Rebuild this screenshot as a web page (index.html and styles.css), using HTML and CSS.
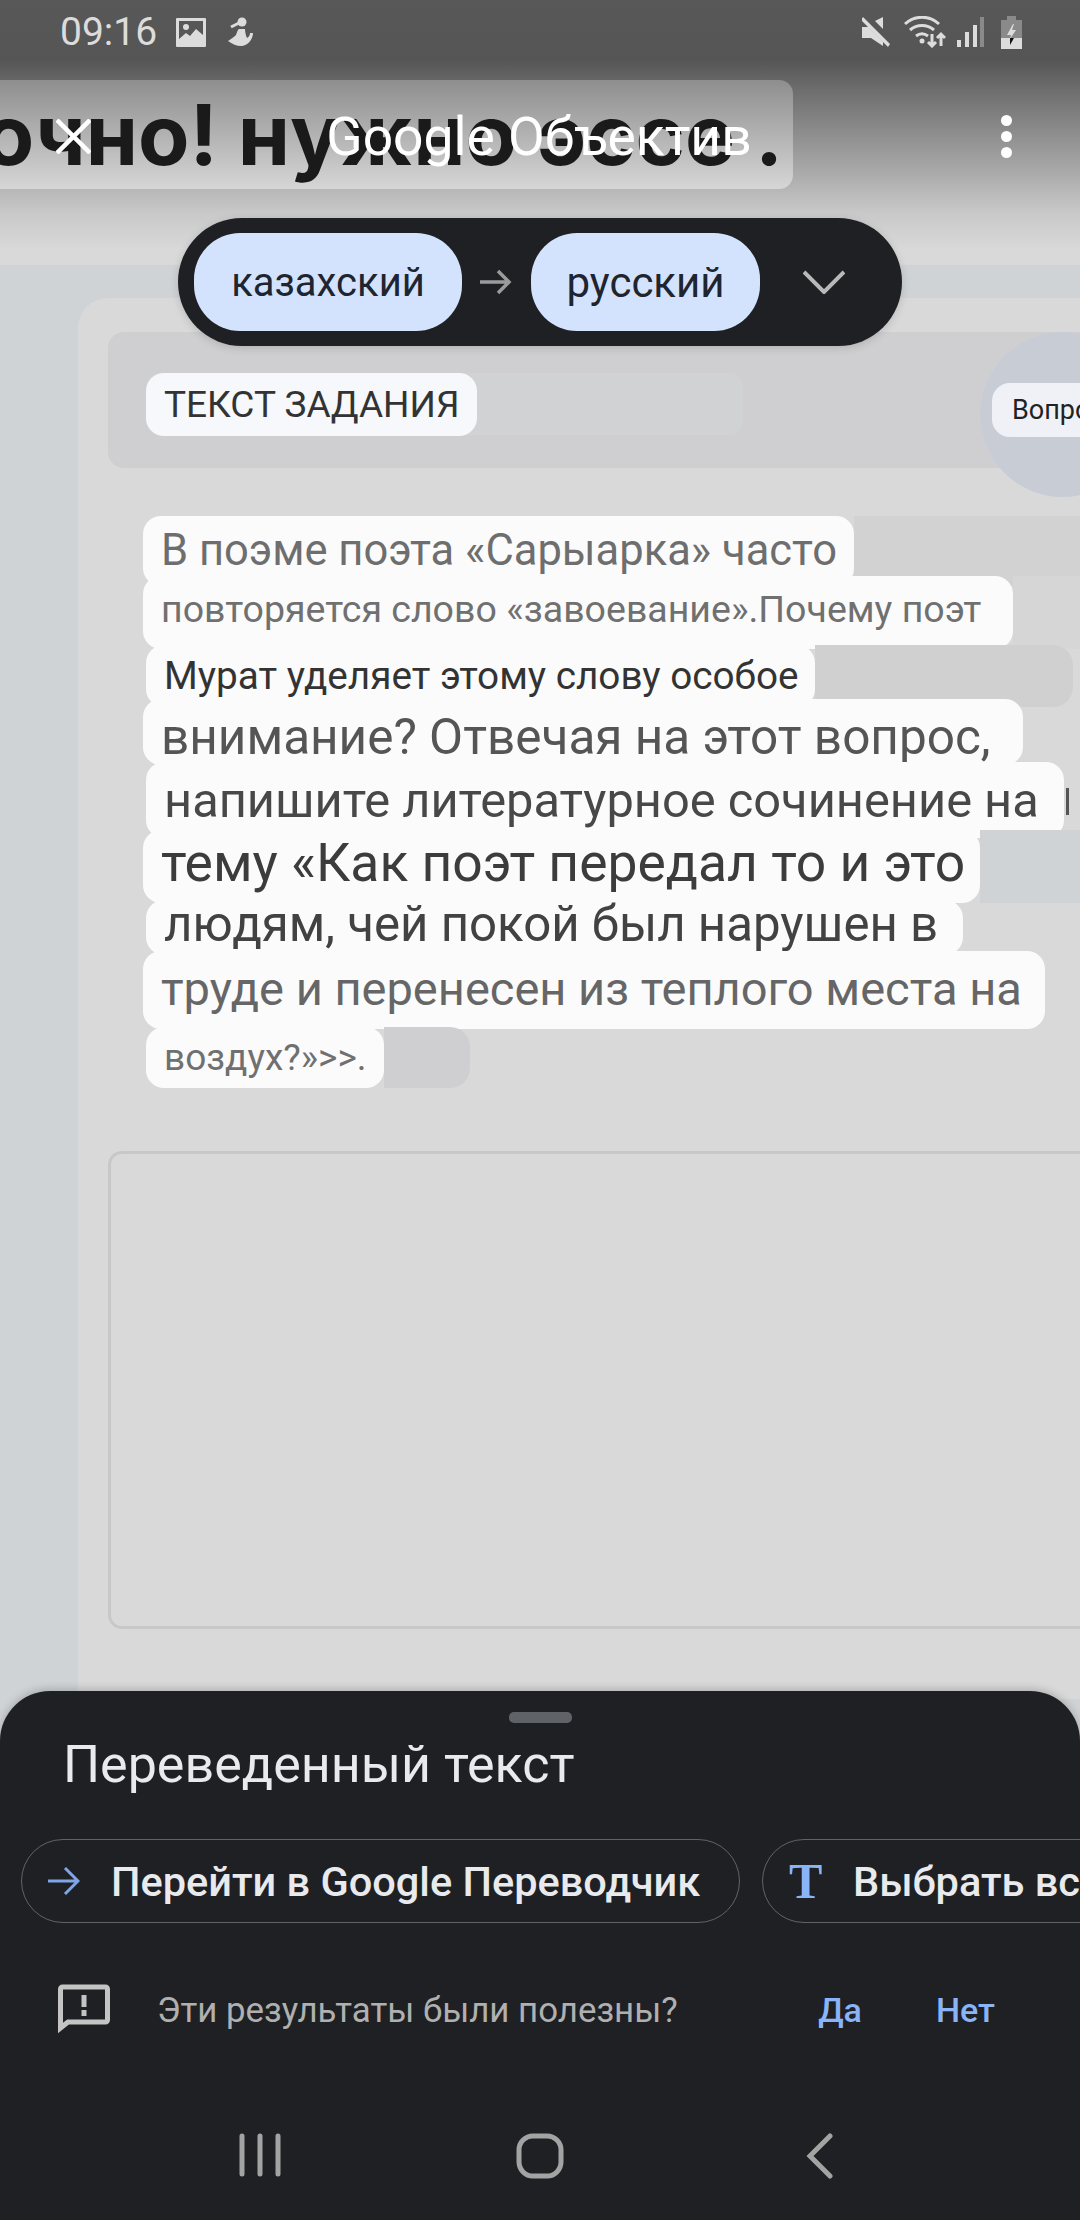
FILE: index.html

```html
<!DOCTYPE html>
<html lang="ru">
<head>
    <meta charset="UTF-8">
    <meta name="viewport" content="width=device-width, initial-scale=1.0">
    <title>Google Объектив</title>
    <link rel="stylesheet" href="styles.css">
</head>
<body>
    <!-- photographed page behind the lens overlay -->
    <div class="page">
        <div class="banner"><span class="banner-text">очно! нужно эссе .</span></div>
        <div class="page-body">
            <div class="card">
                <div class="panel">
                    <div class="panel-band">
                        <span class="tile tile-heading">ТЕКСТ ЗАДАНИЯ</span>
                    </div>
                    <div class="panel-circle">
                        <span class="tile tile-question">Вопрос</span>
                    </div>
                </div>

                <div class="lines">
                    <div class="line line-1"><span class="tile">В поэме поэта «Сарыарка» часто</span><i class="ghost"></i></div>
                    <div class="line line-2"><span class="tile">повторяется слово «завоевание».Почему поэт</span><i class="ghost"></i></div>
                    <div class="line line-3"><span class="tile">Мурат уделяет этому слову особое</span><i class="ghost"></i></div>
                    <div class="line line-4"><span class="tile">внимание? Отвечая на этот вопрос,</span></div>
                    <div class="line line-5"><span class="tile">напишите литературное сочинение на</span><i class="tick"></i></div>
                    <div class="line line-6"><span class="tile">тему «Как поэт передал то и это</span><i class="ghost"></i></div>
                    <div class="line line-7"><span class="tile">людям, чей покой был нарушен в</span></div>
                    <div class="line line-8"><span class="tile">труде и перенесен из теплого места на</span></div>
                    <div class="line line-9"><span class="tile">воздух?»&gt;&gt;.</span><i class="ghost"></i></div>
                </div>

                <div class="answer-box"></div>
            </div>
        </div>
    </div>

    <div class="top">
        <div class="status">
            <div class="status-left">
                <span class="time">09:16</span>
                <svg class="ic-gallery" viewBox="0 0 30 29">
                    <path fill="#dcdcdc" fill-rule="evenodd" d="M1 0h28a1 1 0 0 1 1 1v27a1 1 0 0 1-1 1H1a1 1 0 0 1-1-1V1a1 1 0 0 1 1-1zM3 3v18l7-6 4 3 6-7 7 6V3z"/>
                    <circle cx="10" cy="9" r="3" fill="#dcdcdc"/>
                </svg>
                <svg class="ic-runner" viewBox="0 0 26 30">
                    <circle cx="14" cy="5" r="4.500" fill="#dcdcdc"/>
                    <path fill="none" stroke="#dcdcdc" stroke-width="3" d="M11 6 3 10"/>
                    <path fill="#dcdcdc" d="M11 12h6c0 3 1 7 2 9 2-1 3-3 3-5h3c0 6-5 13-12 13-4 0-9-2-13-5 3-2 6-4 8-6 1-3 2-6 3-6z"/>
                </svg>
            </div>
            <div class="status-right">
                <svg class="ic-mute" viewBox="0 0 29 32">
                    <path fill="#dcdcdc" d="M21 1v12L13 5zM0 11h6l15 15v4L9 22H0zM1 1l27 27-2 3L-1 4z"/>
                </svg>
                <svg class="ic-wifi" viewBox="0 0 42 32">
                    <g fill="none" stroke="#dcdcdc" stroke-width="3">
                        <path d="M1 8c10-9 24-9 34 0"/>
                        <path d="M6 14c7-6 17-6 24 0"/>
                        <path d="M12 20c4-3 8-3 12 0"/>
                    </g>
                    <circle cx="18" cy="25" r="2.500" fill="#dcdcdc"/>
                    <path fill="none" stroke="#dcdcdc" stroke-width="3" d="M28 18v12m-4-4 4 4 4-4M37 30V18m-4 4 4-4 4 4"/>
                </svg>
                <svg class="ic-signal" viewBox="0 0 27 30">
                    <rect x="0" y="23" width="4" height="7" fill="#dcdcdc"/>
                    <rect x="8" y="15" width="4" height="15" fill="#dcdcdc"/>
                    <rect x="16" y="8" width="4" height="22" fill="#dcdcdc"/>
                    <rect x="23" y="0" width="4" height="30" fill="#8a8a8a"/>
                </svg>
                <svg class="ic-battery" viewBox="0 0 21 33">
                    <rect x="6" y="0" width="9" height="4" fill="#8a8a8a"/>
                    <rect x="0" y="4" width="21" height="18" fill="#8a8a8a"/>
                    <rect x="0" y="22" width="21" height="11" fill="#dcdcdc"/>
                    <path fill="#dcdcdc" d="M12 8 6 19h4l-1 4 6-9h-4l2-6z"/>
                    <path fill="#111" d="M9 22h4l-4 7z"/>
                </svg>
            </div>
        </div>
        <div class="titlebar">
            <svg class="ic-close" viewBox="0 0 35 35">
                <path fill="none" stroke="#fff" stroke-width="4.500" d="M1 1l33 33M34 1 1 34"/>
            </svg>
            <span class="app-title">Google Объектив</span>
            <div class="dots"><i></i><i></i><i></i></div>
        </div>
    </div>

    <div class="lang-pill">
        <span class="lang lang-from">казахский</span>
        <svg class="ic-swap" viewBox="0 0 32 28">
            <path fill="none" stroke="#9b9b9b" stroke-width="3.500" d="M0 14h29M18 3l11 11-11 11"/>
        </svg>
        <span class="lang lang-to">русский</span>
        <svg class="ic-chevron" viewBox="0 0 42 24">
            <path fill="none" stroke="#b9b9b9" stroke-width="4" d="M1 2l20 20L41 2"/>
        </svg>
    </div>

    <div class="sheet">
        <div class="handle"></div>
        <div class="sheet-title">Переведенный текст</div>
        <div class="actions">
            <div class="action action-open">
                <svg class="ic-arrow" viewBox="0 0 32 30">
                    <path fill="none" stroke="#7fa5e8" stroke-width="3" d="M0 15h30M17 2l13 13-13 13"/>
                </svg>
                <span>Перейти в Google Переводчик</span>
            </div>
            <div class="action action-select">
                <span class="t-icon">T</span>
                <span>Выбрать все</span>
            </div>
        </div>
        <div class="feedback">
            <svg class="ic-feedback" viewBox="0 0 52 52">
                <path fill="none" stroke="#c4c4c4" stroke-width="5" d="M2.500 44V5a2 2 0 0 1 2-2h43a2 2 0 0 1 2 2v31a2 2 0 0 1-2 2H10z"/>
                <rect x="23.500" y="11" width="5" height="12" fill="#c4c4c4"/>
                <rect x="23.500" y="26" width="5" height="6" fill="#c4c4c4"/>
            </svg>
            <span class="feedback-text">Эти результаты были полезны?</span>
            <span class="feedback-btn">Да</span>
            <span class="feedback-btn">Нет</span>
        </div>
        <div class="navbar">
            <div class="nav-item">
                <svg width="42" height="44" viewBox="0 0 42 44">
                    <path fill="none" stroke="#a3a3a3" stroke-width="5" stroke-linecap="round" d="M3 3v38M21 3v38M39 3v38"/>
                </svg>
            </div>
            <div class="nav-item">
                <svg width="48" height="46" viewBox="0 0 48 46">
                    <rect x="3" y="3" width="42" height="40" rx="14" fill="none" stroke="#a3a3a3" stroke-width="5"/>
                </svg>
            </div>
            <div class="nav-item">
                <svg width="28" height="46" viewBox="0 0 28 46">
                    <path fill="none" stroke="#a3a3a3" stroke-width="5" stroke-linecap="round" d="M24 3 4 23l20 20"/>
                </svg>
            </div>
        </div>
    </div>
</body>
</html>
```

FILE: styles.css

```css
* {
    box-sizing: border-box;
}

html, body {
    margin: 0;
    padding: 0;
}

body {
    position: relative;
    width: 1080px;
    height: 2220px;
    overflow: hidden;
    font-family: Roboto, "Noto Sans", sans-serif;
    background: linear-gradient(180deg, #585858 0, #555 60px, #6a6a6a 85px, #a8a8a8 170px, #c8c8c8 212px, #d9d9d9 250px, #d9d9d9 100%);
}

/* page behind the overlay */
.page {
    padding-top: 80px;
}

.banner {
    display: flex;
    justify-content: flex-end;
    align-items: center;
    width: 793px;
    height: 109px;
    padding-right: 10px;
    overflow: hidden;
    border-radius: 0 14px 14px 0;
    background: linear-gradient(180deg, #8e8e8e 0%, #d6d6d6 100%);
}

.banner-text {
    flex: none;
    font-family: Inter, sans-serif;
    font-size: 84px;
    font-weight: 700;
    line-height: 1;
    color: #1a1a1a;
    white-space: nowrap;
}

.page-body {
    height: 1500px;
    margin-top: 76px;
    padding: 33px 0 0 78px;
    background: #cfd3d6;
}

.card {
    width: 1002px;
    height: 1401px;
    padding: 34px 0 0 30px;
    border-radius: 30px 0 0 0;
    background: #d9d9d9;
}

.panel {
    display: flex;
    width: 972px;
    height: 136px;
    padding-left: 38px;
    border-radius: 16px 0 0 16px;
    background: #cfcfd2;
}

.panel-band {
    flex: none;
    width: 597px;
    height: 62px;
    margin-top: 41px;
    border-radius: 14px;
    background: #d0d2d3;
}

.panel-circle {
    flex: none;
    width: 165px;
    height: 165px;
    margin-left: 237px;
    padding: 51px 0 0 12px;
    border-radius: 50%;
    background: #c8cdd5;
}

.tile {
    display: inline-flex;
    align-items: center;
    flex: none;
    height: 100%;
    padding: 0 0 0 18px;
    border-radius: 18px;
    line-height: 1;
    white-space: nowrap;
    background: #fbfbfc;
}

.tile-heading {
    width: 331px;
    height: 63px;
    font-size: 37px;
    color: #333;
    background: #f6f8fb;
}

.tile-question {
    width: 200px;
    height: 54px;
    padding-left: 20px;
    font-size: 27px;
    color: #222;
    background: #eff1f7;
}

.lines {
    width: 1000px;
    margin: 48px 0 0 35px;
}

.line {
    display: flex;
}

.ghost {
    flex: 1;
    border-radius: 0 20px 20px 0;
    background: #d2d2d2;
}

.tick {
    width: 3px;
    height: 27px;
    margin: 26px 0 0 2px;
    background: #555;
}

.line-1 { height: 70px; }
.line-1 .tile { width: 711px; font-size: 43.500px; color: #6e6e6e; }

.line-2 { height: 73px; margin-top: -10px; }
.line-2 .tile { width: 870px; padding-bottom: 6px; font-size: 37.500px; color: #707070; }
.line-2 .ghost { background: #d6d6d6; }

.line-3 { height: 62px; margin: -4px 0 0 3px; }
.line-3 .tile { width: 669px; font-size: 38.700px; color: #333; }
.line-3 .ghost { flex: none; width: 258px; background: #d0d0d0; }

.line-4 { height: 66px; margin-top: -8px; }
.line-4 .tile { width: 880px; padding-top: 12px; font-size: 49.500px; color: #555; }

.line-5 { height: 76px; margin: -3px 0 0 3px; }
.line-5 .tile { width: 918px; padding-top: 2px; font-size: 48.800px; color: #484848; }

.line-6 { height: 73px; margin-top: -8px; }
.line-6 .tile { width: 837px; padding-bottom: 8px; font-size: 53.400px; color: #3c3c3c; }
.line-6 .ghost { background: #cfd3d5; }

.line-7 { height: 55px; margin: -3px 0 0 3px; }
.line-7 .tile { width: 817px; padding-bottom: 6px; font-size: 49.200px; color: #424242; }

.line-8 { height: 78px; margin-top: -4px; }
.line-8 .tile { width: 902px; padding-bottom: 4px; font-size: 47px; color: #666; }

.line-9 { height: 61px; margin: -2px 0 0 3px; }
.line-9 .tile { width: 238px; font-size: 37px; color: #707070; }
.line-9 .ghost { flex: none; width: 86px; background: #cfcfd2; }

.answer-box {
    width: 972px;
    height: 478px;
    margin-top: 63px;
    border: 3px solid #c8c8c8;
    border-right: none;
    border-radius: 14px 0 0 14px;
}

/* status bar and title */
.top {
    position: absolute;
    top: 0;
    left: 0;
    width: 100%;
}

.status {
    display: flex;
    justify-content: space-between;
    align-items: center;
    height: 64px;
    padding: 0 58px 0 60px;
}

.status-left, .status-right {
    display: flex;
    align-items: center;
}

.time {
    width: 116px;
    font-size: 39px;
    color: #dcdcdc;
}

.ic-gallery { width: 30px; height: 29px; margin-right: 22px; }
.ic-runner { width: 26px; height: 30px; }
.ic-mute { width: 29px; height: 32px; margin-right: 13px; }
.ic-wifi { width: 42px; height: 32px; margin-right: 11px; }
.ic-signal { width: 27px; height: 30px; margin-right: 17px; }
.ic-battery { width: 21px; height: 33px; }

.titlebar {
    display: grid;
    grid-template-columns: 1fr auto 1fr;
    align-items: center;
    height: 72px;
    margin-top: 36px;
    padding: 0 58px 0 56px;
}

.ic-close {
    width: 35px;
    height: 35px;
}

.app-title {
    font-size: 53.400px;
    color: #fff;
    white-space: nowrap;
}

.dots {
    display: flex;
    flex-direction: column;
    gap: 5px;
    justify-self: end;
    margin-right: 10px;
}

.dots i {
    width: 11px;
    height: 11px;
    border-radius: 50%;
    background: #fff;
}

/* language switch */
.lang-pill {
    position: absolute;
    top: 218px;
    left: 178px;
    display: flex;
    align-items: center;
    width: 724px;
    height: 128px;
    padding-left: 16px;
    border-radius: 64px;
    background: #1f2024;
    box-shadow: 0 2px 8px rgba(0,0,0,0.15);
}

.lang {
    display: flex;
    justify-content: center;
    align-items: center;
    height: 98px;
    border-radius: 46px;
    font-size: 40px;
    color: #1f2530;
    background: #d3e3fd;
}

.lang-from { width: 268px; }
.lang-to { width: 229px; font-size: 42px; }

.ic-swap {
    width: 32px;
    height: 28px;
    margin: 0 19px 0 18px;
}

.ic-chevron {
    width: 42px;
    height: 24px;
    margin-left: 43px;
}

/* bottom sheet */
.sheet {
    position: absolute;
    top: 1691px;
    left: 0;
    width: 100%;
    height: 529px;
    overflow: hidden;
    border-radius: 50px 50px 0 0;
    background: #1f2024;
    box-shadow: 0 -2px 8px rgba(0,0,0,0.2);
}

.handle {
    width: 63px;
    height: 11px;
    margin: 21px auto 0;
    border-radius: 5px;
    background: #5f6368;
}

.sheet-title {
    margin: 12px 0 0 63px;
    font-size: 52px;
    line-height: 60px;
    color: #e8eaed;
}

.actions {
    display: flex;
    gap: 22px;
    margin: 44px 0 0 21px;
}

.action {
    display: flex;
    flex: none;
    align-items: center;
    height: 84px;
    border: 1.500px solid #5f6368;
    border-radius: 42px;
    font-size: 41.500px;
    font-weight: 500;
    color: #e8eaed;
    white-space: nowrap;
}

.action-open {
    width: 719px;
    padding-left: 26px;
}

.action-select {
    width: 500px;
    padding-left: 26px;
}

.ic-arrow {
    width: 32px;
    height: 30px;
    margin-right: 31px;
}

.t-icon {
    width: 32px;
    margin-right: 32px;
    font-family: "Liberation Serif", serif;
    font-size: 50px;
    font-weight: 700;
    color: #8ab4f8;
}

.feedback {
    display: flex;
    align-items: center;
    height: 60px;
    margin-top: 57px;
    padding-left: 58px;
}

.ic-feedback {
    width: 52px;
    height: 52px;
    margin-right: 47px;
}

.feedback-text {
    flex: 1;
    font-size: 34.850px;
    color: #b0b0b0;
}

.feedback-btn {
    margin-right: 74px;
    font-size: 34px;
    font-weight: 500;
    color: #8ab4f8;
}

.feedback-btn:last-child {
    margin-right: 85px;
}

.navbar {
    display: flex;
    justify-content: center;
    margin-top: 93px;
}

.nav-item {
    display: flex;
    justify-content: center;
    width: 280px;
}
```
